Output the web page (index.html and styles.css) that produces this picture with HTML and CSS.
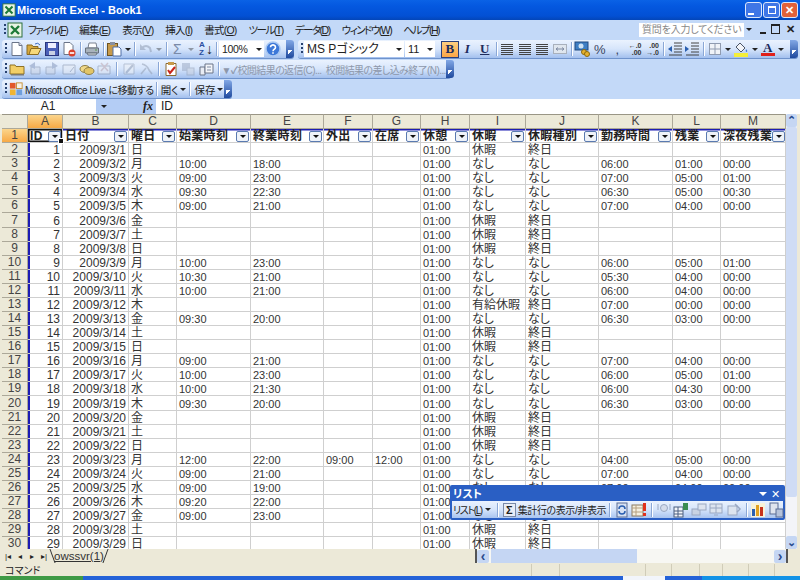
FILE: index.html
```html
<!DOCTYPE html>
<html lang="ja">

<head>
  <meta charset="UTF-8">
  <title>Microsoft Excel - Book1</title>
  <link rel="stylesheet" href="styles.css">
</head>

<body>
  <svg class="defs" width="0" height="0">
    <symbol id="i-xl" viewBox="0 0 16 16"><rect x="1" y="1" width="14" height="14" fill="#e8f4e4" stroke="#2c6e3c"/><path d="M4 4l8 8M12 4l-8 8" stroke="#1d7a38" stroke-width="2.4"/></symbol>
    <symbol id="i-new" viewBox="0 0 16 16"><path d="M3 1.500h7l3 3v10H3z" fill="#fff" stroke="#6a7488"/><path d="M10 1.500v3h3" fill="#dde" stroke="#6a7488"/></symbol>
    <symbol id="i-open" viewBox="0 0 16 16"><path d="M1 4h5l1 1.500h5v8H1z" fill="#d8a93c" stroke="#8a6a20"/><path d="M3 13.500l2-6h10l-3 6z" fill="#f6d87a" stroke="#8a6a20"/><path d="M9 3q3-2 5 1" fill="none" stroke="#3a6ac0"/></symbol>
    <symbol id="i-save" viewBox="0 0 16 16"><rect x="1.500" y="1.500" width="13" height="13" fill="#4a5fb8" stroke="#2a357c"/><rect x="4" y="2" width="8" height="5" fill="#eef"/><rect x="5" y="10" width="6" height="4" fill="#c8d0e4"/></symbol>
    <symbol id="i-perm" viewBox="0 0 16 16"><path d="M3 1.500h6l3 3v9H3z" fill="#fff" stroke="#6a7488"/><circle cx="11" cy="12" r="3.500" fill="#d8412c"/><rect x="8.800" y="11.200" width="4.400" height="1.600" fill="#fff"/></symbol>
    <symbol id="i-print" viewBox="0 0 16 16"><path d="M5 2h7l1 5H4z" fill="#fff" stroke="#7a8290"/><path d="M1.500 7h13v5h-13z" fill="#a9b3bd" stroke="#67707c"/><path d="M3 12h10l-1 2H4z" fill="#dfe4e8" stroke="#67707c"/><rect x="11" y="8.500" width="2" height="1" fill="#5a9c50"/></symbol>
    <symbol id="i-paste" viewBox="0 0 16 16"><rect x="1.500" y="2.500" width="10" height="12" fill="#c79a4a" stroke="#6d5424"/><rect x="4" y="1" width="5" height="3" fill="#8890a0"/><path d="M7 6h6l2 2v7H7z" fill="#fff" stroke="#4f6fa8"/></symbol>
    <symbol id="i-undo" viewBox="0 0 16 16"><path d="M4 7q4-4 8 0l1 4" fill="none" stroke="#8a97ad" stroke-width="2"/><path d="M2 3v6h6z" fill="#8a97ad"/></symbol>
    <symbol id="i-help" viewBox="0 0 16 16"><circle cx="8" cy="8" r="7" fill="#3d78d8" stroke="#a9c8f2" stroke-width="1.500"/><path d="M5.500 6.200a2.500 2.300 0 1 1 3.800 2c-.9.6-1.300 1-1.300 2M8 11.200v1.600" fill="none" stroke="#fff" stroke-width="1.600"/></symbol>
    <symbol id="i-folder" viewBox="0 0 16 16"><path d="M1 4h5l1 1.500h8V13H1z" fill="#f2cf68" stroke="#8f7226"/><rect x="2" y="13" width="13" height="1.500" fill="#7d7a70"/></symbol>
    <symbol id="i-mail1" viewBox="0 0 16 16"><path d="M5 6h9v7H5z" fill="#cfd6e4" stroke="#7f8ba3"/><path d="M9 1L3 5l6 3z" fill="#7f92b8"/></symbol>
    <symbol id="i-mail2" viewBox="0 0 16 16"><path d="M2 6h9v7H2z" fill="#cfd6e4" stroke="#7f8ba3"/><path d="M8 1l6 4-6 3z" fill="#7f92b8"/></symbol>
    <symbol id="i-env" viewBox="0 0 16 16"><path d="M2 4h12v9H2z" fill="#e8ecf4" stroke="#7f8ba3"/><path d="M9 11l4-5" stroke="#7f8ba3"/></symbol>
    <symbol id="i-note" viewBox="0 0 16 16"><ellipse cx="6" cy="8" rx="5" ry="3.500" fill="#f0d98a" stroke="#8f7f48"/><ellipse cx="10" cy="10" rx="5" ry="3.500" fill="#e2c567" stroke="#8f7f48"/></symbol>
    <symbol id="i-del" viewBox="0 0 16 16"><path d="M2 5h12v8H2z" fill="#e8ecf4" stroke="#7f8ba3"/><path d="M5 2l7 8M12 2l-7 8" stroke="#b9a0a8" stroke-width="1.500"/></symbol>
    <symbol id="i-pen" viewBox="0 0 16 16"><path d="M3 3h10v10H3z" fill="#eef1f6" stroke="#8f9bb0"/><path d="M5 12l7-8" stroke="#8f9bb0" stroke-width="2"/></symbol>
    <symbol id="i-x" viewBox="0 0 16 16"><path d="M4 3q5 1 7 6l3 4M3 13l5-6" fill="none" stroke="#8f9bb0" stroke-width="1.600"/></symbol>
    <symbol id="i-track" viewBox="0 0 16 16"><path d="M3 2.500h10v12H3z" fill="#fff" stroke="#8a6a30"/><rect x="5" y="1" width="6" height="3" fill="#c79a4a"/><path d="M5 9l2 3 5-6" fill="none" stroke="#c8261c" stroke-width="2"/></symbol>
    <symbol id="i-pages" viewBox="0 0 16 16"><rect x="2" y="2" width="8" height="8" fill="#9aa8c2"/><rect x="7" y="7" width="7" height="7" fill="#c8d0de" stroke="#8f9bb0"/></symbol>
    <symbol id="i-card" viewBox="0 0 16 16"><path d="M2 6h5v8H2z" fill="#e8ecf4" stroke="#6a7488"/><path d="M7 3h8v9H7z" fill="#f3f5f9" stroke="#6a7488"/><path d="M9 6h4M9 9h4" stroke="#7f8ba3"/></symbol>
    <symbol id="i-merge" viewBox="0 0 16 16"><rect x="1.500" y="3.500" width="13" height="9" fill="#dfe6ee" stroke="#a8b0bc"/><path d="M4 8h8M6 6.500L4 8l2 1.500M10 6.500L12 8l-2 1.500" fill="none" stroke="#7f8ba3"/></symbol>
    <symbol id="i-money" viewBox="0 0 16 16"><rect x="1" y="1" width="13" height="8" fill="#3f7fc4" stroke="#214a80"/><circle cx="7" cy="5" r="2.500" fill="#cfe3f4"/><circle cx="10" cy="11" r="2.500" fill="#e6b12e" stroke="#8a6a10"/><circle cx="13" cy="13" r="2.500" fill="#e6b12e" stroke="#8a6a10"/></symbol>
    <symbol id="i-outdent" viewBox="0 0 16 16"><path d="M7 2h8M7 5h8M7 8h8M7 11h8M2 14h13" stroke="#444"/><path d="M5 5L1 8l4 3z" fill="#2a5fb0"/></symbol>
    <symbol id="i-indent" viewBox="0 0 16 16"><path d="M7 2h8M7 5h8M7 8h8M7 11h8M2 14h13" stroke="#444"/><path d="M1 5l4 3-4 3z" fill="#2a5fb0"/></symbol>
    <symbol id="i-border" viewBox="0 0 16 16"><rect x="2.500" y="2.500" width="11" height="11" fill="#f0f3f8" stroke="#8f9bb0"/><path d="M8 2.500v11M2.500 8h11" stroke="#8f9bb0"/></symbol>
    <symbol id="i-fill" viewBox="0 0 16 16"><path d="M7 2l5 5-4 4-5-5z" fill="#f3f5f9" stroke="#4a5568"/><path d="M13 8q2 2 1 3-2 0-1-3" fill="#3d78d8"/><rect x="1" y="12" width="14" height="4" fill="#f4ee3a"/></symbol>
    <symbol id="i-live" viewBox="0 0 16 16"><rect x="1" y="1" width="6.500" height="6.500" fill="#e2592a"/><rect x="8.500" y="1" width="6.500" height="6.500" fill="#f6f3e8" stroke="#c48a2a"/><rect x="1" y="8.500" width="6.500" height="6.500" fill="#f0b432"/><rect x="8.500" y="8.500" width="6.500" height="6.500" fill="#6f9fdc"/></symbol>
    <symbol id="i-refresh" viewBox="0 0 16 16"><rect x="3" y="1" width="10" height="14" fill="#d6e1f3" stroke="#5a6c94"/><path d="M5 7a3 3 0 0 1 6 0M11 9a3 3 0 0 1-6 0" fill="none" stroke="#2a5fb0" stroke-width="1.500"/></symbol>
    <symbol id="i-alert" viewBox="0 0 16 16"><rect x="1" y="3" width="11" height="11" fill="#f5f0e0" stroke="#8a7a60"/><path d="M1 6h11M1 10h11M5 3v11" stroke="#b5a080"/><rect x="12" y="1" width="3" height="8" fill="#e0321c"/><rect x="12" y="11" width="3" height="3" fill="#e0321c"/></symbol>
    <symbol id="i-link" viewBox="0 0 16 16"><circle cx="8" cy="6" r="3.500" fill="#d4dceb" stroke="#9aa8c2"/><path d="M2 2v6M14 2v6" stroke="#9aa8c2"/></symbol>
    <symbol id="i-grid" viewBox="0 0 16 16"><rect x="1" y="5" width="9" height="10" fill="#f3f5f9" stroke="#4a5f80"/><path d="M1 9h9M1 12h9M5 5v10" stroke="#4a5f80"/><rect x="10" y="1" width="5" height="7" fill="#3a8c50"/></symbol>
    <symbol id="i-grey1" viewBox="0 0 16 16"><rect x="1" y="7" width="8" height="6" fill="#c9d3e3" stroke="#9aa8c2"/><rect x="7" y="2" width="8" height="6" fill="#dde4ef" stroke="#9aa8c2"/></symbol>
    <symbol id="i-grey2" viewBox="0 0 16 16"><rect x="2" y="2" width="12" height="9" fill="#dde4ef" stroke="#9aa8c2"/><path d="M2 6h12M8 2v9M6 13h4" stroke="#9aa8c2"/></symbol>
    <symbol id="i-grey3" viewBox="0 0 16 16"><rect x="2" y="4" width="9" height="9" fill="#dde4ef" stroke="#9aa8c2"/><path d="M9 2l5 5-3 3" fill="none" stroke="#9aa8c2" stroke-width="1.500"/></symbol>
    <symbol id="i-chart" viewBox="0 0 16 16"><rect x="1" y="1" width="14" height="14" fill="#f8f2d8"/><rect x="2" y="7" width="3" height="7" fill="#2a5fb0"/><rect x="6" y="3" width="3" height="11" fill="#e0a020"/><rect x="10" y="5" width="3" height="9" fill="#c8321c"/></symbol>
    <symbol id="i-pg" viewBox="0 0 16 16"><rect x="2" y="1" width="8" height="11" fill="#dfe4ee" stroke="#5a6c94"/><rect x="8" y="7" width="7" height="8" fill="#b5c2da" stroke="#5a6c94"/></symbol>
  </svg>

  <header class="title-bar">
    <svg class="ic title-ic"><use href="#i-xl"/></svg>
    <span class="title-text">Microsoft Excel - Book1</span>
    <div class="win-btns">
      <span class="win-btn"><i class="win-min"></i></span>
      <span class="win-btn"><i class="win-max"></i></span>
      <span class="win-btn win-close">✕</span>
    </div>
  </header>

  <nav class="menu-bar">
    <i class="grip"></i>
    <svg class="ic"><use href="#i-xl"/></svg>
    <ul class="menu">
      <li class="kana">ファイル(<u>F</u>)</li>
      <li>編集(<u>E</u>)</li>
      <li>表示(<u>V</u>)</li>
      <li>挿入(<u>I</u>)</li>
      <li>書式(<u>O</u>)</li>
      <li class="kana">ツール(<u>T</u>)</li>
      <li class="kana">データ(<u>D</u>)</li>
      <li class="kana">ウィンドウ(<u>W</u>)</li>
      <li class="kana">ヘルプ(<u>H</u>)</li>
    </ul>
    <div class="help-box">質問を入力してください</div>
    <i class="arrow help-arrow"></i>
    <span class="doc-btn doc-min"></span>
    <span class="doc-btn doc-max"></span>
    <span class="doc-btn doc-x">✕</span>
  </nav>

  <div class="tb-row">
    <div class="tb tb-std">
      <i class="grip"></i>
      <span class="b"><svg class="ic"><use href="#i-new"/></svg></span>
      <span class="b"><svg class="ic"><use href="#i-open"/></svg></span>
      <span class="b"><svg class="ic"><use href="#i-save"/></svg></span>
      <span class="b"><svg class="ic"><use href="#i-perm"/></svg></span>
      <i class="sep"></i>
      <span class="b"><svg class="ic"><use href="#i-print"/></svg></span>
      <i class="sep"></i>
      <span class="b"><svg class="ic"><use href="#i-paste"/></svg></span><i class="arrow"></i>
      <i class="sep"></i>
      <span class="b off"><svg class="ic"><use href="#i-undo"/></svg></span><i class="arrow off"></i>
      <i class="sep"></i>
      <span class="b sigma">Σ</span><i class="arrow off"></i>
      <span class="b sort"><b class="sort-az">A<br>Z</b><b class="sort-arrow">↓</b></span>
      <i class="sep"></i>
      <span class="combo zoom-box">100%<i class="arrow"></i></span>
      <span class="b"><svg class="ic"><use href="#i-help"/></svg></span>
      <i class="chevron"></i>
    </div>
    <div class="tb tb-fmt">
      <i class="grip"></i>
      <span class="combo font-box">MS Pゴシック<i class="arrow"></i></span>
      <span class="combo size-box">11<i class="arrow"></i></span>
      <span class="b on fmt-b">B</span>
      <span class="b fmt-i">I</span>
      <span class="b fmt-u">U</span>
      <i class="sep"></i>
      <span class="b"><i class="align"></i></span>
      <span class="b"><i class="align"></i></span>
      <span class="b"><i class="align"></i></span>
      <span class="b"><svg class="ic"><use href="#i-merge"/></svg></span>
      <i class="sep"></i>
      <span class="b"><svg class="ic"><use href="#i-money"/></svg></span>
      <span class="b fmt-pct">%</span>
      <span class="b fmt-pct">,</span>
      <span class="b digits"><em>←.0</em><em>.00</em></span>
      <span class="b digits"><em>.00</em><em>→.0</em></span>
      <i class="sep"></i>
      <span class="b"><svg class="ic"><use href="#i-outdent"/></svg></span>
      <span class="b"><svg class="ic"><use href="#i-indent"/></svg></span>
      <i class="sep"></i>
      <span class="b"><svg class="ic"><use href="#i-border"/></svg></span><i class="arrow"></i>
      <span class="b"><svg class="ic"><use href="#i-fill"/></svg></span><i class="arrow"></i>
      <span class="b"><b class="font-a">A</b></span><i class="arrow"></i>
      <i class="chevron"></i>
    </div>
  </div>

  <div class="tb-row">
    <div class="tb tb-review">
      <i class="grip"></i>
      <span class="b"><svg class="ic"><use href="#i-folder"/></svg></span>
      <span class="b off"><svg class="ic"><use href="#i-mail1"/></svg></span>
      <span class="b off"><svg class="ic"><use href="#i-mail2"/></svg></span>
      <span class="b off"><svg class="ic"><use href="#i-env"/></svg></span>
      <span class="b"><svg class="ic"><use href="#i-note"/></svg></span>
      <span class="b off"><svg class="ic"><use href="#i-del"/></svg></span>
      <i class="sep"></i>
      <span class="b off"><svg class="ic"><use href="#i-pen"/></svg></span>
      <span class="b off"><svg class="ic"><use href="#i-x"/></svg></span>
      <i class="sep"></i>
      <span class="b"><svg class="ic"><use href="#i-track"/></svg></span>
      <span class="b off"><svg class="ic"><use href="#i-pages"/></svg></span>
      <span class="b"><svg class="ic"><use href="#i-card"/></svg></span>
      <i class="sep"></i>
      <span class="review-text"><b>▼✓</b>校閲結果の返信(C)...&nbsp; 校閲結果の差し込み終了(N)...</span>
      <i class="chevron"></i>
    </div>
  </div>

  <div class="tb-row">
    <div class="tb tb-live">
      <i class="grip"></i>
      <svg class="ic live-ic"><use href="#i-live"/></svg>
      <span class="live-text live-main">Microsoft Office Live に移動する</span>
      <i class="sep"></i>
      <span class="live-text">開く</span><i class="arrow"></i>
      <i class="sep"></i>
      <span class="live-text">保存</span><i class="arrow"></i>
      <i class="chevron"></i>
    </div>
  </div>

  <div class="formula-bar">
    <div class="name-box">A1</div>
    <div class="fx-area"><i class="arrow"></i><em class="fx">fx</em></div>
    <div class="formula-input">ID</div>
  </div>

  <div class="sheet">
    <div class="grid-wrap">
      <table class="grid">
        <colgroup>
          <col class="w26"><col class="w35"><col class="w66"><col class="w48"><col class="w74"><col class="w73"><col class="w49"><col class="w48"><col class="w49"><col class="w56"><col class="w73"><col class="w74"><col class="w48"><col class="w65">
        </colgroup>
        <thead>
          <tr class="cols">
            <th></th><th class="active">A</th><th>B</th><th>C</th><th>D</th><th>E</th><th>F</th><th>G</th><th>H</th><th>I</th><th>J</th><th>K</th><th>L</th><th>M</th>
          </tr>
        </thead>
        <tbody>
          <tr class="list-head">
            <th class="active">1</th>
            <td class="sel"><div class="hd"><span>ID</span><i class="fb"></i></div></td>
            <td><div class="hd"><span>日付</span><i class="fb"></i></div></td>
            <td><div class="hd"><span>曜日</span><i class="fb"></i></div></td>
            <td><div class="hd"><span>始業時刻</span><i class="fb"></i></div></td>
            <td><div class="hd"><span>終業時刻</span><i class="fb"></i></div></td>
            <td><div class="hd"><span>外出</span><i class="fb"></i></div></td>
            <td><div class="hd"><span>在席</span><i class="fb"></i></div></td>
            <td><div class="hd"><span>休憩</span><i class="fb"></i></div></td>
            <td><div class="hd"><span>休暇</span><i class="fb"></i></div></td>
            <td><div class="hd"><span>休暇種別</span><i class="fb"></i></div></td>
            <td><div class="hd"><span>勤務時間</span><i class="fb"></i></div></td>
            <td><div class="hd"><span>残業</span><i class="fb"></i></div></td>
            <td><div class="hd"><span>深夜残業</span><i class="fb"></i></div></td>
          </tr>
          <tr><th>2</th><td>1</td><td>2009/3/1</td><td>日</td><td></td><td></td><td></td><td></td><td>01:00</td><td>休暇</td><td>終日</td><td></td><td></td><td></td></tr>
          <tr><th>3</th><td>2</td><td>2009/3/2</td><td>月</td><td>10:00</td><td>18:00</td><td></td><td></td><td>01:00</td><td>なし</td><td>なし</td><td>06:00</td><td>01:00</td><td>00:00</td></tr>
          <tr><th>4</th><td>3</td><td>2009/3/3</td><td>火</td><td>09:00</td><td>23:00</td><td></td><td></td><td>01:00</td><td>なし</td><td>なし</td><td>07:00</td><td>05:00</td><td>01:00</td></tr>
          <tr><th>5</th><td>4</td><td>2009/3/4</td><td>水</td><td>09:30</td><td>22:30</td><td></td><td></td><td>01:00</td><td>なし</td><td>なし</td><td>06:30</td><td>05:00</td><td>00:30</td></tr>
          <tr><th>6</th><td>5</td><td>2009/3/5</td><td>木</td><td>09:00</td><td>21:00</td><td></td><td></td><td>01:00</td><td>なし</td><td>なし</td><td>07:00</td><td>04:00</td><td>00:00</td></tr>
          <tr><th>7</th><td>6</td><td>2009/3/6</td><td>金</td><td></td><td></td><td></td><td></td><td>01:00</td><td>休暇</td><td>終日</td><td></td><td></td><td></td></tr>
          <tr><th>8</th><td>7</td><td>2009/3/7</td><td>土</td><td></td><td></td><td></td><td></td><td>01:00</td><td>休暇</td><td>終日</td><td></td><td></td><td></td></tr>
          <tr><th>9</th><td>8</td><td>2009/3/8</td><td>日</td><td></td><td></td><td></td><td></td><td>01:00</td><td>休暇</td><td>終日</td><td></td><td></td><td></td></tr>
          <tr><th>10</th><td>9</td><td>2009/3/9</td><td>月</td><td>10:00</td><td>23:00</td><td></td><td></td><td>01:00</td><td>なし</td><td>なし</td><td>06:00</td><td>05:00</td><td>01:00</td></tr>
          <tr><th>11</th><td>10</td><td>2009/3/10</td><td>火</td><td>10:30</td><td>21:00</td><td></td><td></td><td>01:00</td><td>なし</td><td>なし</td><td>05:30</td><td>04:00</td><td>00:00</td></tr>
          <tr><th>12</th><td>11</td><td>2009/3/11</td><td>水</td><td>10:00</td><td>21:00</td><td></td><td></td><td>01:00</td><td>なし</td><td>なし</td><td>06:00</td><td>04:00</td><td>00:00</td></tr>
          <tr><th>13</th><td>12</td><td>2009/3/12</td><td>木</td><td></td><td></td><td></td><td></td><td>01:00</td><td>有給休暇</td><td>終日</td><td>07:00</td><td>00:00</td><td>00:00</td></tr>
          <tr><th>14</th><td>13</td><td>2009/3/13</td><td>金</td><td>09:30</td><td>20:00</td><td></td><td></td><td>01:00</td><td>なし</td><td>なし</td><td>06:30</td><td>03:00</td><td>00:00</td></tr>
          <tr><th>15</th><td>14</td><td>2009/3/14</td><td>土</td><td></td><td></td><td></td><td></td><td>01:00</td><td>休暇</td><td>終日</td><td></td><td></td><td></td></tr>
          <tr><th>16</th><td>15</td><td>2009/3/15</td><td>日</td><td></td><td></td><td></td><td></td><td>01:00</td><td>休暇</td><td>終日</td><td></td><td></td><td></td></tr>
          <tr><th>17</th><td>16</td><td>2009/3/16</td><td>月</td><td>09:00</td><td>21:00</td><td></td><td></td><td>01:00</td><td>なし</td><td>なし</td><td>07:00</td><td>04:00</td><td>00:00</td></tr>
          <tr><th>18</th><td>17</td><td>2009/3/17</td><td>火</td><td>10:00</td><td>23:00</td><td></td><td></td><td>01:00</td><td>なし</td><td>なし</td><td>06:00</td><td>05:00</td><td>01:00</td></tr>
          <tr><th>19</th><td>18</td><td>2009/3/18</td><td>水</td><td>10:00</td><td>21:30</td><td></td><td></td><td>01:00</td><td>なし</td><td>なし</td><td>06:00</td><td>04:30</td><td>00:00</td></tr>
          <tr><th>20</th><td>19</td><td>2009/3/19</td><td>木</td><td>09:30</td><td>20:00</td><td></td><td></td><td>01:00</td><td>なし</td><td>なし</td><td>06:30</td><td>03:00</td><td>00:00</td></tr>
          <tr><th>21</th><td>20</td><td>2009/3/20</td><td>金</td><td></td><td></td><td></td><td></td><td>01:00</td><td>休暇</td><td>終日</td><td></td><td></td><td></td></tr>
          <tr><th>22</th><td>21</td><td>2009/3/21</td><td>土</td><td></td><td></td><td></td><td></td><td>01:00</td><td>休暇</td><td>終日</td><td></td><td></td><td></td></tr>
          <tr><th>23</th><td>22</td><td>2009/3/22</td><td>日</td><td></td><td></td><td></td><td></td><td>01:00</td><td>休暇</td><td>終日</td><td></td><td></td><td></td></tr>
          <tr><th>24</th><td>23</td><td>2009/3/23</td><td>月</td><td>12:00</td><td>22:00</td><td>09:00</td><td>12:00</td><td>01:00</td><td>なし</td><td>なし</td><td>04:00</td><td>05:00</td><td>00:00</td></tr>
          <tr><th>25</th><td>24</td><td>2009/3/24</td><td>火</td><td>09:00</td><td>21:00</td><td></td><td></td><td>01:00</td><td>なし</td><td>なし</td><td>07:00</td><td>04:00</td><td>00:00</td></tr>
          <tr><th>26</th><td>25</td><td>2009/3/25</td><td>水</td><td>09:00</td><td>19:00</td><td></td><td></td><td>01:00</td><td>なし</td><td>なし</td><td>07:00</td><td>04:00</td><td>00:00</td></tr>
          <tr><th>27</th><td>26</td><td>2009/3/26</td><td>木</td><td>09:20</td><td>22:00</td><td></td><td></td><td>01:00</td><td>なし</td><td>なし</td><td>07:00</td><td>04:00</td><td>00:00</td></tr>
          <tr><th>28</th><td>27</td><td>2009/3/27</td><td>金</td><td>09:00</td><td>23:00</td><td></td><td></td><td>01:00</td><td>なし</td><td>なし</td><td>07:00</td><td>05:00</td><td>00:00</td></tr>
          <tr><th>29</th><td>28</td><td>2009/3/28</td><td>土</td><td></td><td></td><td></td><td></td><td>01:00</td><td>休暇</td><td>終日</td><td></td><td></td><td></td></tr>
          <tr><th>30</th><td>29</td><td>2009/3/29</td><td>日</td><td></td><td></td><td></td><td></td><td>01:00</td><td>休暇</td><td>終日</td><td></td><td></td><td></td></tr>
        </tbody>
      </table>
    </div>
    <div class="v-scroll">
      <span class="sb-btn">⌃</span>
      <div class="v-thumb"></div>
      <div class="v-track"></div>
      <span class="sb-btn">⌄</span>
    </div>

    <div class="list-bar">
      <div class="list-title"><span>リスト</span><span class="list-ctrl"><i class="list-down"></i>✕</span></div>
      <div class="list-tools">
        <span class="list-menu">リスト(<u>L</u>)</span><i class="arrow"></i>
        <i class="sep"></i>
        <span class="b list-sigma">Σ</span>
        <span class="list-label">集計行の表示/非表示</span>
        <i class="sep"></i>
        <span class="b"><svg class="ic"><use href="#i-refresh"/></svg></span>
        <span class="b"><svg class="ic"><use href="#i-alert"/></svg></span>
        <i class="sep"></i>
        <span class="b"><svg class="ic"><use href="#i-link"/></svg></span>
        <span class="b"><svg class="ic"><use href="#i-grid"/></svg></span>
        <span class="b"><svg class="ic"><use href="#i-grey1"/></svg></span>
        <span class="b"><svg class="ic"><use href="#i-grey2"/></svg></span>
        <span class="b"><svg class="ic"><use href="#i-grey3"/></svg></span>
        <i class="sep"></i>
        <span class="b"><svg class="ic"><use href="#i-chart"/></svg></span>
        <span class="b"><svg class="ic"><use href="#i-pg"/></svg></span>
      </div>
    </div>
  </div>

  <div class="tabs-bar">
    <div class="tab-nav"><span>|◂</span><span>◂</span><span>▸</span><span>▸|</span></div>
    <div class="tab"><u>owssvr(1)</u></div>
    <div class="h-scroll">
      <span class="sb-btn">‹</span>
      <div class="h-thumb"></div>
      <div class="h-track"></div>
      <span class="sb-btn">›</span>
    </div>
  </div>

  <div class="status-bar">
    <span class="status-text">コマンド</span>
    <div class="status-cells">
      <i class="w28"></i><i class="w86"></i><i class="w26"></i><i class="w28"></i><i class="w23"></i><i class="w26"></i><i class="w26"></i><i class="w21"></i>
    </div>
  </div>

  <div class="taskbar"><i class="tk-start"></i><i class="tk-blue"></i><i class="tk-white"></i><i class="tk-blue2"></i><i class="tk-tray"></i></div>
</body>

</html>
```

FILE: styles.css
```css
* {
  box-sizing: border-box;
}

html,
body {
  margin: 0;
  padding: 0;
}

body {
  display: flex;
  flex-direction: column;
  width: 800px;
  height: 580px;
  overflow: hidden;
  background: #c3d9f8;
  color: #222;
  font-family: "Liberation Sans", "Noto Sans CJK JP", sans-serif;
  font-size: 11px;
  font-feature-settings: "palt";
}

.defs {
  position: absolute;
}

i,
em {
  font-style: normal;
  flex: none;
}

.ic {
  display: block;
  flex: none;
  width: 16px;
  height: 16px;
}

/* title */
.title-bar {
  display: flex;
  align-items: center;
  height: 20px;
  padding: 0 2px;
  background: linear-gradient(#0a62e6, #0458e0 30%, #0250d4 80%, #0346b8);
}

.title-ic {
  width: 14px;
  height: 14px;
}

.title-text {
  margin-left: 1px;
  color: #fff;
  font-size: 11px;
  font-weight: bold;
}

.win-btns {
  display: flex;
  gap: 1px;
  margin-left: auto;
}

.win-btn {
  display: flex;
  align-items: center;
  justify-content: center;
  width: 17px;
  height: 16px;
  border: 1px solid #dbe6fb;
  border-radius: 3px;
  background: #3f76e6;
  color: #fff;
  font-size: 11px;
  font-weight: bold;
}

.win-close {
  background: #e2613a;
}

.win-min {
  width: 6px;
  height: 2px;
  margin: 7px 5px 0 0;
  background: #fff;
}

.win-max {
  width: 8px;
  height: 8px;
  border: 1px solid #fff;
  border-top-width: 2px;
}

/* menu */
.menu-bar {
  display: flex;
  align-items: center;
  height: 19px;
  padding: 0 2px 0 4px;
}

.grip {
  width: 2px;
  height: 12px;
  margin-right: 1px;
  background: repeating-linear-gradient(#27416f 0 2px, transparent 2px 4px);
}

.menu {
  display: flex;
  gap: 12px;
  margin: 0 0 0 5px;
  padding: 0;
  font-size: 10.500px;
  list-style: none;
  letter-spacing: -.8px;
  white-space: nowrap;
}

.menu .kana {
  letter-spacing: -1.500px;
}

.help-box {
  width: 105px;
  height: 14px;
  margin-left: auto;
  padding-left: 3px;
  background: #fff;
  color: #888;
  font-size: 10px;
  line-height: 14px;
  letter-spacing: -.2px;
  white-space: nowrap;
  overflow: hidden;
}

.arrow {
  display: block;
  width: 0;
  height: 0;
  margin: 0 1.500px;
  border: 3px solid transparent;
  border-top: 3px solid #222;
  border-bottom: 0;
}

.arrow.off {
  opacity: .4;
}

.help-arrow {
  margin: 0 4px 0 2px;
}

.doc-btn {
  width: 13px;
  text-align: center;
  font-weight: bold;
}

.doc-min::before {
  content: "";
  display: inline-block;
  width: 6px;
  height: 2px;
  background: #222;
}

.doc-max::before {
  content: "";
  display: inline-block;
  width: 7px;
  height: 7px;
  border: 1px solid #222;
  border-top-width: 2px;
}

.doc-x {
  width: 16px;
}

/* toolbars */
.tb-row {
  display: flex;
  gap: 4px;
  height: 20px;
  padding: 1px 2px;
}

.tb {
  display: flex;
  align-items: center;
  padding-left: 3px;
  border-radius: 3px;
  background: linear-gradient(#eaf2fe, #d6e5fb 50%, #a3c0ee);
  box-shadow: 0 1px 0 #6f93cc;
}

.tb-std {
  width: 292px;
}

.tb-fmt {
  flex: 1;
}

.tb-review {
  width: 449px;
}

.tb-live {
  width: 230px;
}

.b {
  display: flex;
  align-items: center;
  justify-content: center;
  flex: none;
  width: 17.500px;
  height: 17px;
}

.off {
  opacity: .5;
}

.sep {
  width: 1px;
  height: 14px;
  margin: 0 2px;
  background: #8aa7d6;
  box-shadow: 1px 0 0 #fff;
}

.tb-review .sep,
.list-tools .sep {
  margin: 0 3px;
}

.chevron {
  align-self: stretch;
  width: 8px;
  margin-left: auto;
  border-radius: 0 3px 3px 0;
  background: linear-gradient(#82a8e6, #1f4a9e);
  position: relative;
}

.chevron::after {
  content: "";
  position: absolute;
  left: 2px;
  bottom: 3px;
  width: 4px;
  height: 4px;
  border-top: 1px solid #fff;
  background: linear-gradient(135deg, #fff 50%, transparent 50%);
}

.sigma {
  color: #7a8aa8;
  font-size: 14px;
}

.sort {
  width: 16px;
  margin-left: 3px;
  gap: 1px;
}

.sort-az {
  font-size: 8px;
  line-height: 8px;
  color: #2a4fa0;
}

.sort-arrow {
  font-size: 14px;
  color: #222;
}

.combo {
  display: flex;
  align-items: center;
  justify-content: space-between;
  flex: none;
  height: 16px;
  padding-left: 3px;
  background: #fff;
  line-height: 16px;
  white-space: nowrap;
}

.combo .arrow {
  margin: 0 2px 0 0;
}

.zoom-box {
  width: 45px;
  font-size: 10.500px;
  letter-spacing: -.3px;
}

.font-box {
  width: 100px;
  font-size: 12px;
}

.size-box {
  width: 30px;
  margin: 0 6px 0 1px;
}

.fmt-b,
.fmt-i,
.fmt-u {
  font-family: "Liberation Serif", serif;
  font-size: 13px;
  font-weight: bold;
  color: #1e2c5c;
}

.on {
  border: 1px solid #2a3f7c;
  background: linear-gradient(#ffcf80, #fba646);
}

.fmt-i {
  font-style: italic;
}

.fmt-u {
  text-decoration: underline;
}

.fmt-pct {
  font-size: 13px;
  color: #3a4560;
}

.digits {
  flex-direction: column;
  align-items: flex-end;
  padding-right: 2px;
  font-size: 7px;
  font-weight: bold;
  line-height: 7px;
  color: #333;
}

.font-a {
  width: 14px;
  border-bottom: 3px solid #e0201c;
  font-family: "Liberation Serif", serif;
  font-size: 13px;
  line-height: 11px;
  text-align: center;
  color: #1e2c5c;
}

.align {
  width: 12px;
  height: 11px;
  background: repeating-linear-gradient(#444 0 1px, transparent 1px 2px);
}

.review-text {
  color: #8d97aa;
  font-size: 10px;
  letter-spacing: -.6px;
  white-space: nowrap;
}

.live-ic {
  width: 14px;
  height: 14px;
  margin: 0 2px 0 1px;
}

.live-text {
  font-size: 10.500px;
  margin-left: 2px;
  white-space: nowrap;
}

.live-main {
  margin-left: 0;
  font-size: 10px;
  letter-spacing: -.45px;
}

/* formula bar */
.formula-bar {
  display: flex;
  height: 15px;
  line-height: 15px;
  background: #fff;
  font-size: 12px;
}

.name-box {
  width: 96px;
  text-align: center;
}

.fx-area {
  display: flex;
  align-items: center;
  justify-content: space-between;
  width: 60px;
  padding: 0 3px;
  background: #b4cdf5;
}

.fx {
  font-family: "Liberation Serif", serif;
  font-style: italic;
  font-weight: bold;
}

.formula-input {
  padding-left: 5px;
}

/* sheet */
.sheet {
  position: relative;
  display: flex;
  height: 435px;
  padding: 0 3px 0 2px;
  background: #ece9d8;
}

.grid-wrap {
  width: 784px;
  height: 435px;
  overflow: hidden;
}

.grid {
  width: 784px;
  table-layout: fixed;
  border-collapse: separate;
  border-spacing: 0;
  background: #fff;
}

.w26 { width: 26px; }
.w35 { width: 35px; }
.w66 { width: 66px; }
.w48 { width: 48px; }
.w74 { width: 74px; }
.w73 { width: 73px; }
.w49 { width: 49px; }
.w56 { width: 56px; }
.w65 { width: 65px; }

.grid th {
  height: 14.090px;
  padding: 0;
  border-right: 1px solid #aca899;
  border-bottom: 1px solid #aca899;
  background: #ece9d8;
  color: #444;
  font-size: 12px;
  font-weight: normal;
  line-height: 13px;
  text-align: center;
}

.grid .cols th {
  height: 14.500px;
  border-top: 1px solid #9a9686;
}

.grid th.active {
  background: linear-gradient(#fbd58c, #f7a945);
}

.grid td {
  height: 14.090px;
  padding: 2px 2px 0;
  overflow: hidden;
  border-right: 1px solid #cfcfcf;
  border-bottom: 1px solid #cfcfcf;
  color: #333;
  font-size: 11px;
  line-height: 11px;
  white-space: nowrap;
}

.grid td:nth-child(2),
.grid td:nth-child(3) {
  font-size: 12px;
  text-align: right;
}

.grid td:nth-child(2) {
  box-shadow: inset 2px 0 #1c1cb4;
}

.grid td:nth-child(4),
.grid td:nth-child(10),
.grid td:nth-child(11) {
  font-size: 12px;
}

.grid .list-head td {
  padding: 1px 1px 0 2px;
  box-shadow: inset 0 1.500px #1c1cb4;
  color: #222;
  font-size: 12px;
  font-weight: bold;
  letter-spacing: .3px;
  line-height: 12px;
  text-align: left;
}

.grid .list-head td.sel {
  position: relative;
  box-shadow: inset 0 0 0 1.500px #111;
  overflow: visible;
}

.sel::after {
  content: "";
  position: absolute;
  right: -2px;
  bottom: -2px;
  width: 4px;
  height: 4px;
  border: 1px solid #fff;
  background: #111;
}

.hd {
  display: flex;
  align-items: center;
  justify-content: space-between;
  height: 12px;
}

.fb {
  display: block;
  position: relative;
  width: 13px;
  height: 11px;
  border: 1px solid #5a7ab0;
  border-radius: 2px;
  background: #eef2f8;
}

.fb::after {
  content: "";
  position: absolute;
  left: 3px;
  top: 3px;
  border: 3px solid transparent;
  border-top: 3px solid #111;
  border-bottom: 0;
}

/* scrollbars */
.v-scroll {
  display: flex;
  flex-direction: column;
  width: 11px;
  background: #f3f4f8;
}

.sb-btn {
  display: flex;
  align-items: center;
  justify-content: center;
  flex: none;
  width: 11px;
  height: 13px;
  border-radius: 2px;
  background: #c5d6f3;
  color: #2a4a8c;
  font-size: 11px;
  font-weight: bold;
  line-height: 11px;
}

.v-thumb {
  height: 370px;
  border-radius: 2px;
  background: #cfdcf5;
}

.v-track {
  flex: 1;
}

/* floating list toolbar */
.list-bar {
  position: absolute;
  left: 450px;
  top: 371px;
  width: 335px;
  height: 35px;
  border: 2px solid #2a5fc4;
  border-radius: 2px;
  background: #d6e5fb;
  z-index: 1;
}

.list-title {
  display: flex;
  justify-content: space-between;
  height: 14px;
  padding: 0 3px 0 1px;
  background: #2a5fc4;
  color: #fff;
  font-weight: bold;
  line-height: 14px;
}

.list-ctrl {
  display: flex;
  align-items: center;
  gap: 4px;
  font-weight: normal;
}

.list-down {
  border: 4px solid transparent;
  border-top: 4px solid #fff;
  border-bottom: 0;
}

.list-tools {
  display: flex;
  align-items: center;
  height: 17px;
  padding-left: 1px;
  background: linear-gradient(#eaf2fe, #d6e5fb 50%, #a9c4f0);
}

.list-tools .arrow {
  margin: 0 3px;
}

.list-menu {
  flex: none;
  font-size: 10px;
  letter-spacing: -1.400px;
  white-space: nowrap;
}

.list-tools .list-sigma {
  width: 13px;
  height: 14px;
  margin: 0 2px;
  border: 1px solid #7a8aa8;
  background: #e9edf5;
  font-size: 11px;
  font-weight: bold;
}

.list-label {
  flex: none;
  font-size: 10px;
  letter-spacing: -.4px;
  white-space: nowrap;
}

/* tabs and status */
.tabs-bar {
  display: flex;
  align-items: center;
  height: 14px;
  padding-left: 2px;
  background: #ece9d8;
}

.tab-nav {
  display: flex;
  justify-content: space-between;
  width: 48px;
  padding: 0 3px;
  color: #222;
  font-size: 8px;
}

.tab {
  position: relative;
  width: 58px;
  text-align: center;
  color: #333;
  font-size: 11.500px;
  line-height: 14px;
}

.tab::before,
.tab::after {
  content: "";
  position: absolute;
  top: 0;
  width: 1px;
  height: 14px;
  background: #333;
}

.tab::before {
  left: 2px;
  transform: skewX(20deg);
}

.tab::after {
  right: 2px;
  transform: skewX(-20deg);
}

.h-scroll {
  display: flex;
  align-items: center;
  width: 313px;
  height: 14px;
  margin-left: auto;
  margin-right: 12px;
  border-left: 2px solid #555;
  border-right: 2px solid #555;
  background: #f7f7f3;
}

.h-scroll .sb-btn {
  width: 12px;
  font-size: 14px;
}

.h-thumb {
  width: 146px;
  height: 14px;
  margin-left: 2px;
  background: #c5d6f3;
}

.h-track {
  flex: 1;
}

.status-bar {
  display: flex;
  align-items: center;
  justify-content: space-between;
  height: 13px;
  padding: 0 5px;
  background: #ece9d8;
  font-size: 10px;
}

.status-cells {
  display: flex;
  height: 12px;
}

.status-cells i {
  border-left: 1px solid #d0ccb8;
}

.w28 { width: 28px; }
.w86 { width: 86px; }
.w23 { width: 23px; }
.w21 { width: 21px; }
.status-cells .w26 { width: 26px; }

.taskbar {
  display: flex;
  flex: 1;
}

.tk-start {
  width: 83px;
  background: #3f9a46;
}

.tk-blue {
  width: 540px;
  background: #2462d8;
}

.tk-white {
  width: 42px;
  background: #f2f5fb;
}

.tk-blue2 {
  width: 37px;
  background: #2462d8;
}

.tk-tray {
  flex: 1;
  background: #1292e6;
}
```
